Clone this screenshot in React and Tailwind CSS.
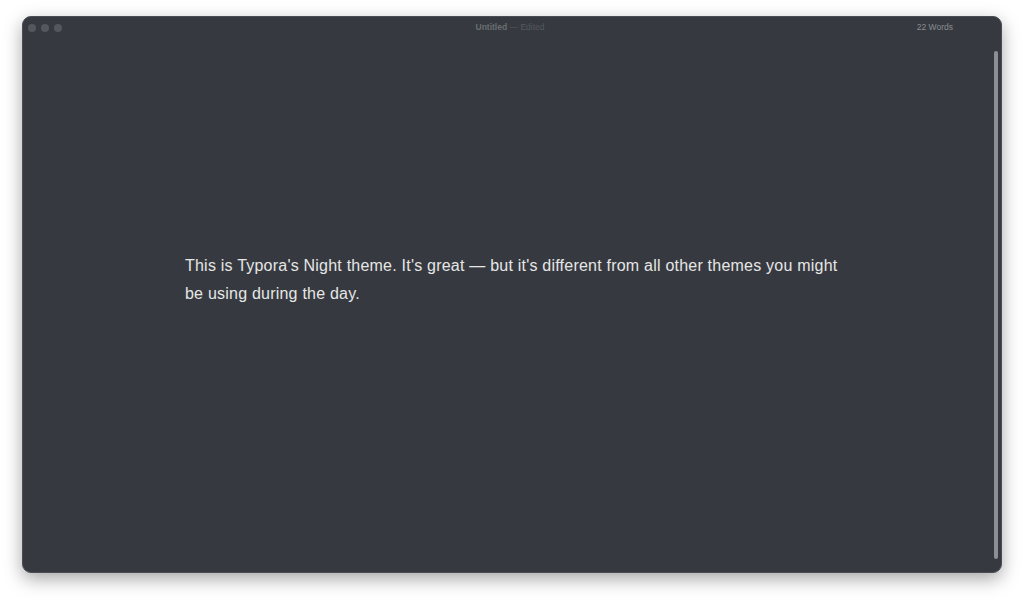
export default function App() {
  return (
    <div className="w-[1024px] h-[601px] bg-white relative overflow-hidden" style={{ fontFamily: '"Liberation Sans", Arial, sans-serif' }}>
      <div className="absolute left-[22px] top-[16px] w-[980px] h-[557px] rounded-[9px] bg-[#363a40] shadow-[0_6px_18px_rgba(0,0,0,0.35)] border border-[#4a4e54] overflow-hidden">
        {/* title bar */}
        <div className="h-[21px] flex items-center relative">
          <div className="flex gap-[5px] pl-[5px]">
            <span className="w-[8px] h-[8px] rounded-full bg-[#54585d]" />
            <span className="w-[8px] h-[8px] rounded-full bg-[#54585d]" />
            <span className="w-[8px] h-[8px] rounded-full bg-[#54585d]" />
          </div>
          <div className="absolute left-0 right-0 text-center text-[8.5px] leading-[21px] pr-[4px]">
            <span className="font-bold text-[#6a6d71]">Untitled</span>
            <span className="text-[#55595e]"> — Edited</span>
          </div>
          <div className="ml-auto pr-[48px] text-[8.5px] text-[#8a8d91]">22 Words</div>
        </div>
        <div className="flex h-[535px]">
          <div className="flex-1 pl-[162px] pt-[214px]">
            <p className="w-[668px] text-[16px] leading-[28px] tracking-[0.22px] text-[#e6e6e6]">
              This is Typora's Night theme. It's great — but it's different from all other themes you might be using during the day.
            </p>
          </div>
          <div className="w-[10px] pt-[13px] pb-[14px] flex justify-center">
            <div className="w-[4px] h-full rounded-full bg-[#8c8f93]" />
          </div>
        </div>
      </div>
    </div>
  )
}
